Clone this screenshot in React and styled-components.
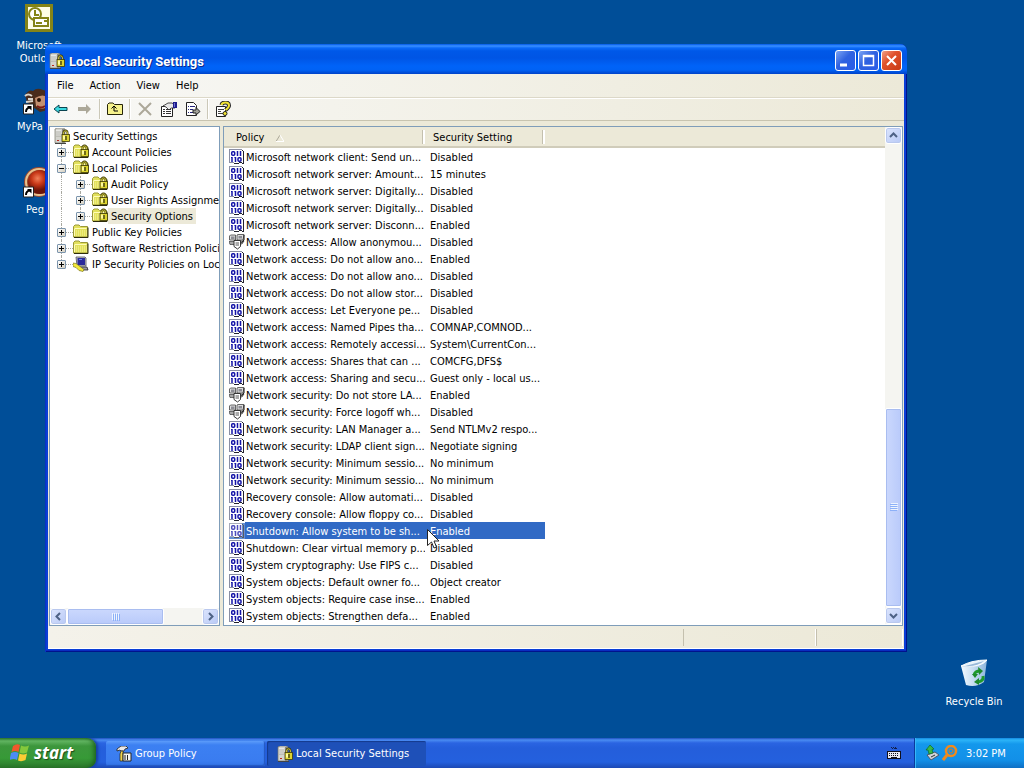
import { useState } from 'react'
import styled, { createGlobalStyle, css } from 'styled-components'

const GlobalStyle = createGlobalStyle`
  * {
    box-sizing: border-box;
  }

  body {
    margin: 0;
    overflow: hidden;
    font-family: 'DejaVu Sans Condensed', 'DejaVu Sans', Tahoma, sans-serif;
    font-size: 11px;
    color: #000;
    cursor: default;
  }

  button {
    font: inherit;
    padding: 0;
    border: none;
    background: none;
  }

  svg {
    display: block;
    flex: none;
  }
`

const Screen = styled.div`
  display: flex;
  flex-direction: column;
  height: 100vh;
  background: #004e98;
`

const Desktop = styled.main`
  position: relative;
  flex: 1;
  overflow: hidden;
`

const Shortcut = styled.a`
  position: absolute;
  left: ${({ $left }) => $left};
  right: ${({ $right }) => $right};
  top: ${({ $top }) => $top};
  bottom: ${({ $bottom }) => $bottom};
  width: 76px;
  display: flex;
  flex-direction: column;
  align-items: center;
  gap: 5px;
  color: #fff;
  text-decoration: none;
  line-height: 13px;
  text-align: center;
`

const ShortcutLabel = styled.span`
  width: ${({ $width }) => $width};
  text-align: ${({ $width }) => ($width ? 'left' : 'center')};
`

const AppWindow = styled.section`
  position: absolute;
  left: 45px;
  right: 117px;
  top: 44px;
  padding: 0 3px 3px;
  border-radius: 7px 7px 0 0;
  background: #0a3ed6;
  box-shadow: inset 1px 0 #0a32c4, inset -1px -1px #00138c, inset 0 -2px #0a2cc0;
  overflow: hidden;
`

const TitleBar = styled.header`
  display: flex;
  align-items: center;
  gap: 4px;
  height: 30px;
  margin: 0 -3px;
  padding: 3px 5px 0 4px;
  background: linear-gradient(
    #0058e6 0,
    #3a90ff 2px,
    #0a6af8 4px,
    #0058e8 7px,
    #0055e5 14px,
    #0063f8 22px,
    #0062f5 26px,
    #0042c8 30px
  );
`

const Title = styled.h1`
  flex: 1;
  margin: 0;
  padding-top: 2px;
  color: #fff;
  font-family: Roboto, sans-serif;
  font-size: 13px;
  font-weight: 700;
  line-height: 18px;
  text-shadow: 1px 1px #0a2a8c;
`

const Captions = styled.div`
  display: flex;
  gap: 2px;
`

const CaptionButton = styled.button`
  width: 21px;
  height: 21px;
  border: 1px solid #fff;
  border-radius: 3px;
  background: ${({ $close }) =>
    $close
      ? 'linear-gradient(135deg, #f0a088, #e0522c 40%, #c83a14)'
      : 'linear-gradient(135deg, #7ca4f4, #2f62e0 45%, #2a5ce8)'};
`

const MenuBar = styled.nav`
  display: flex;
  align-items: center;
  height: 23px;
  padding-left: 1px;
  background: linear-gradient(90deg, #f8f8f6, #ece9d8);
`

const MenuItem = styled.button`
  padding: 0 8px;
  line-height: 21px;
`

const ToolBar = styled.div`
  display: flex;
  align-items: center;
  height: 24px;
  padding-left: 1px;
  border-top: 1px solid #dcd8c8;
  border-bottom: 1px solid #c8c4b0;
  box-shadow: inset 0 1px #fff;
  background: linear-gradient(90deg, #f8f8f6, #ece9d8);
`

const ToolButton = styled.button`
  display: grid;
  place-items: center;
  width: 24px;
  height: 22px;
`

const ToolSeparator = styled.span`
  width: 2px;
  height: 20px;
  margin: 0 2px;
  border-left: 1px solid #cbc8b8;
  background: #fff;
`

const Panes = styled.div`
  display: flex;
  gap: 3px;
  padding: 5px 1px 0;
  background: #ece9d8;
`

const Pane = styled.div`
  border: 1px solid #7f9db9;
  background: #fff;
  overflow: hidden;
`

const TreePane = styled(Pane)`
  flex: none;
  width: 171px;
  display: flex;
  flex-direction: column;
`

const ListPane = styled(Pane)`
  flex: 1;
  display: flex;
  align-items: flex-start;
  padding-bottom: 1px;
`

const Tree = styled.ul`
  flex: 1;
  margin: 0;
  padding: 1px 0 0 4px;
  list-style: none;
`

const TreeItem = styled.li`
  display: flex;
  align-items: center;
  height: 16px;
  white-space: nowrap;
`

const Guide = styled.span`
  position: relative;
  flex: none;
  width: 19px;
  height: 16px;
  display: flex;
  align-items: center;
  padding-left: 3px;

  &::before {
    content: '';
    position: absolute;
    left: 7px;
    top: 0;
    height: ${({ $last }) => ($last ? '8px' : '16px')};
    border-left: ${({ $line }) => ($line ? '1px dotted #a8a8a0' : 'none')};
  }

  &::after {
    content: '';
    position: absolute;
    left: 12px;
    right: 0;
    top: 8px;
    border-top: ${({ $branch }) => ($branch ? '1px dotted #a8a8a0' : 'none')};
  }
`

const Expander = styled.button`
  position: relative;
  z-index: 1;
  width: 9px;
  height: 9px;
  border: 1px solid #7b94ac;
  border-radius: 1px;
  background: linear-gradient(135deg, #fff, #d4cfc0);

  svg {
    width: 7px;
    height: 7px;
  }
`

const TreeLabel = styled.span`
  min-width: 0;
  height: 16px;
  padding: 2px 3px 0;
  overflow: hidden;
  line-height: 14px;
  background: ${({ $selected }) => ($selected ? '#ece9d8' : 'transparent')};
`

const PolicyTable = styled.table`
  flex: 1;
  table-layout: fixed;
  width: 100%;
  border-spacing: 0;
  white-space: nowrap;
`

const HeadCell = styled.th`
  position: relative;
  height: 21px;
  padding: 3px 0 0 ${({ $pad }) => $pad};
  border-bottom: 2px solid #d0ccba;
  background: #ece9d8;
  font-weight: 400;
  line-height: 16px;
  text-align: left;

  &:not(:last-child)::after {
    content: '';
    position: absolute;
    right: 0;
    top: 3px;
    width: 2px;
    height: 14px;
    border-left: 1px solid #c4c0ae;
    background: #fff;
  }
`

const HeadLabel = styled.span`
  display: flex;
  align-items: center;
  gap: 12px;
`

const PolicyRow = styled.tr`
  height: 17px;

  ${({ $selected }) =>
    $selected &&
    css`
      color: #fff;

      td:nth-child(2),
      td:first-child span {
        background: #316ac5;
      }

      td:first-child svg {
        background: #316ac5;
        opacity: 0.75;
      }
    `}
`

const Cell = styled.td`
  height: 17px;
  padding: ${({ $name }) => ($name ? '0 0 0 5px' : '2px 0 0 5px')};
  line-height: 15px;
  overflow: hidden;
`

const PolicyName = styled.div`
  display: flex;
  align-items: center;
  height: 17px;

  span {
    flex: 1;
    height: 17px;
    padding: 2px 0 0 1px;
  }
`

const ScrollBar = styled.div`
  display: flex;
  flex: none;
  align-self: stretch;
  flex-direction: ${({ $vertical }) => ($vertical ? 'column' : 'row')};
  ${({ $vertical }) => ($vertical ? 'width: 17px' : 'height: 17px')};
  background: #f5f5f1;
`

const ArrowButton = styled.button`
  flex: none;
  display: grid;
  place-items: center;
  width: 17px;
  height: 17px;
  border: 1px solid #fff;
  border-radius: 3px;
  background: linear-gradient(135deg, #dce5fd, #b8c9f6);
  box-shadow: inset 0 0 0 1px #b9c8ee;
`

const Track = styled.div`
  flex: 1;
  display: flex;
  flex-direction: inherit;
  justify-content: ${({ $end }) => ($end ? 'flex-end' : 'flex-start')};
`

const Thumb = styled.div`
  display: grid;
  place-items: center;
  flex: 0 0 ${({ $share }) => $share};
  border: 1px solid #fff;
  border-radius: 2px;
  background: ${({ $vertical }) =>
    `linear-gradient(${$vertical ? '90deg' : '180deg'}, #cbd8fd, #b9cafa)`};
  box-shadow: inset 0 0 0 1px #a9bdf0;
`

const StatusBar = styled.footer`
  display: flex;
  justify-content: flex-end;
  height: 23px;
  padding: 3px 1px 2px;
  background: linear-gradient(90deg, #f4f2ea, #ece9d8);
  border-bottom: 1px solid #fff;
`

const StatusCell = styled.span`
  flex: 0 0 ${({ $width }) => $width};
  border-left: 1px solid #c4c0ae;
  border-right: 1px solid #fff;
`

const Pointer = styled.svg`
  position: absolute;
  left: 427px;
  top: 529px;
`

const TaskBar = styled.footer`
  display: flex;
  height: 30px;
  color: #fff;
  background: linear-gradient(
    #1f50c0 0,
    #4a8cf2 2px,
    #2a64e2 5px,
    #245edb 10px,
    #2460de 24px,
    #1c48b4 30px
  );
`

const StartButton = styled.button`
  display: flex;
  align-items: center;
  gap: 4px;
  width: 96px;
  padding-left: 10px;
  border-radius: 0 9px 9px 0;
  color: #fff;
  font-family: 'Open Sans', sans-serif;
  font-size: 17px;
  font-style: italic;
  font-weight: 700;
  line-height: 24px;
  text-shadow: 1px 1px 1px #1a4a1a;
  background: linear-gradient(#2d7a2d 0, #62b562 3px, #3c963c 8px, #379a37 20px, #2a752a 30px);
  box-shadow: inset -4px 0 5px -2px #1c5f1c, 2px 0 3px #163f9c;
`

const Tasks = styled.div`
  flex: 1;
  display: flex;
  gap: 2px;
  padding: 3px 0 2px 10px;
`

const TaskButton = styled.button`
  flex: 0 1 159px;
  display: flex;
  align-items: center;
  gap: 3px;
  padding-left: 10px;
  border-radius: 2px;
  color: #fff;
  white-space: nowrap;
  background: ${({ $active }) =>
    $active ? '#1e50b8' : 'linear-gradient(#5c9cfa 0, #3c80f2 4px, #3a7cf0 20px, #3272e4)'};
  box-shadow: ${({ $active }) =>
    $active ? 'inset 1px 1px 1px #143a8c' : 'inset -1px -1px 1px #2458c0'};
`

const Language = styled.div`
  display: grid;
  place-items: center;
  width: 40px;
`

const Tray = styled.div`
  display: flex;
  align-items: center;
  gap: 2px;
  width: 110px;
  padding-left: 9px;
  border-left: 1px solid #0a3a9c;
  background: linear-gradient(#1488e0 0, #2cb4f8 2px, #1498ec 6px, #1290e8 22px, #0f6fc4 30px);
  box-shadow: inset 1px 0 #38b8f8;
`

const Clock = styled.time`
  margin-left: 6px;
  white-space: nowrap;
`

const LockGlyph = ({ x = 8, y = 2 }) => (
  <g transform={`translate(${x} ${y})`}>
    <path d="M1.500 5V3Q1.500 .5 3.500 .5T5.500 3V5" fill="none" stroke="#3c3808" strokeWidth="2" />
    <path d="M1.500 5V3Q1.500 .8 3.500 .8T5.500 3V5" fill="none" stroke="#e8e048" strokeWidth=".8" />
    <rect x="0" y="4.500" width="7.500" height="7" fill="#dcd430" stroke="#3c3808" strokeWidth=".8" />
    <path d="M1 5.500h2v4H1z" fill="#fffaa0" />
    <path d="M4 6v4" stroke="#26240a" strokeWidth="1.200" />
  </g>
)

const ServerIcon = () => (
  <svg width="16" height="16" viewBox="0 0 16 16">
    <path d="M1 1l2-1h6l2 1v14H1z" fill="#d4d4ce" stroke="#77756c" strokeWidth=".7" />
    <path d="M8 1v14h2.500V1z" fill="#8c8a80" />
    <path d="M2 3h5M2 5h5M2 7h5" stroke="#fff" />
    <path d="M2 4h5M2 6h5M2 8h5" stroke="#8c8a80" strokeWidth=".6" />
    <path d="M3 12.500h2" stroke="#c02418" />
    <path d="M1 15.500h11" stroke="#444" />
    <LockGlyph x={8} y={2} />
  </svg>
)

const FolderIcon = ({ locked }) => (
  <svg width="16" height="16" viewBox="0 0 16 16">
    <path d="M.5 13V2.500L2 1h4l1.500 1.500h7V13z" fill="#e2e05c" stroke="#9a9838" />
    <path d="M1.500 4.500h12M1.500 5v7" stroke="#fffcb8" />
    <path d="M3 7h11M3 9h11M3 11h11" stroke="#f8f6a0" strokeDasharray="1 1" />
    <path d="M1 13.500h14V3.500" fill="none" stroke="#2e2c0c" />
    {locked && <LockGlyph x={8} y={1} />}
  </svg>
)

const IpSecurityIcon = () => (
  <svg width="16" height="16" viewBox="0 0 16 16">
    <path d="M3 1h9l1 1v8H4z" fill="#c4c4c8" stroke="#50505c" strokeWidth=".8" />
    <rect x="4.500" y="2" width="7.500" height="7" fill="#2a2a9c" />
    <path d="M6 3h3v1H6z" fill="#6a80e8" />
    <path d="M6 11h8l1 3H7z" fill="#9a9aa0" stroke="#22222c" strokeWidth=".8" />
    <path d="M0 7l3 .5 4 3 4 3-1 2-4-1-3-3-3-1z" fill="#f2e83c" stroke="#6a6410" strokeWidth=".6" />
  </svg>
)

// binary value policy: two rows of bits on a curled page
const BinaryIcon = () => (
  <svg width="16" height="16" viewBox="0 0 16 16">
    <g shapeRendering="crispEdges">
      <path d="M1 1h12v13H9l-1 1H6l-1-1H1z" fill="#fff" />
      <path d="M0 14V0h13v1H1v12h4v1z" fill="#8a8fa4" />
      <path d="M14 2h1v13h-2v-1h1zM13 1h1v1h-1zM5 14h5v1H5zM10 13h3v1h-3z" fill="#22222e" />
    </g>
    <g fill="none" stroke="#1414a8">
      <rect x="2.700" y="2.700" width="3" height="3.600" rx="1" strokeWidth="1.500" />
      <path d="M8.500 2v5M11.500 2v5M3 8v5M6.500 8v5" strokeWidth="1.500" />
      <path d="M2 8.500h1M5.500 8.500h1" />
      <rect x="9" y="8.700" width="3" height="3.600" rx="1" strokeWidth="1.500" />
    </g>
  </svg>
)

const ComputersIcon = () => (
  <svg width="16" height="16" viewBox="0 0 16 16">
    <path d="M.5 2l1-1h5v5H.5zM8 1l1-.5h6L14 6H8z" fill="#dcdcdc" stroke="#444" strokeWidth=".8" />
    <path d="M2 2.500h3.500v2.500H2zM9.500 2H13v2.500H9.500z" fill="#8c8c94" />
    <path d="M0 7.500h6v3H1zM9 7h6l-2 3H9z" fill="#a8a8a8" stroke="#222" strokeWidth=".6" />
    <path d="M5 6.500h6.500v6L8.500 15 5 12.500z" fill="#fff" stroke="#222" strokeWidth=".9" />
    <path d="M6.500 9h3.500M6.500 11h3.500" stroke="#555" />
    <path d="M15 1v5l-2.500 3" fill="none" stroke="#111" />
  </svg>
)

const toolIcons = {
  back: <path d="M1 8l5-4v2.500h8v3H6V12z" fill="#3cd8e0" stroke="#0a4450" />,
  forward: <path d="M14 8L9 3v3H1v4h8v3z" fill="#aca899" />,
  up: (
    <>
      <path d="M.5 13.500V3.500L2 2h4l1.500 1.500h8v10z" fill="#f6f28c" stroke="#26240a" />
      <path d="M7 5v5h4M4.500 7.500L7 5l2.500 2.500" fill="none" stroke="#000" />
    </>
  ),
  remove: <path d="M2 2l12 12M14 2L2 14" stroke="#aca899" strokeWidth="2" />,
  properties: (
    <>
      <path d="M.5 5.500h11v10H.5z" fill="#fff" stroke="#222" />
      <path d="M2 8.500h2M5 8.500h5M2 10.500h2M5 10.500h5M2 12.500h2M5 12.500h5" stroke="#333" />
      <path d="M2 5l5-3h4l3 2v3h-4L8 9 5 6z" fill="#e8e8e8" stroke="#222" strokeWidth=".8" />
      <path d="M12 1h4v6h-4z" fill="#1c1c8c" />
      <path d="M13 2h1v4h-1z" fill="#7070d0" />
    </>
  ),
  exportList: (
    <>
      <path d="M1.500 1.500h7l3 3v10h-10z" fill="#fff" stroke="#222" />
      <path d="M3 5.500h1M5 5.500h5M3 8.500h1M5 8.500h3M3 11.500h1M5 11.500h3" stroke="#24247c" />
      <path d="M8 9h3V6.500L15 10.500 11 14v-2H8z" fill="#a0a098" stroke="#222" />
    </>
  ),
  help: (
    <>
      <path d="M1.500 5.500h9v10h-9z" fill="#fff" stroke="#222" />
      <path d="M3 8.500h6M3 10.500h3M3 12.500h6" stroke="#444" />
      <path d="M6.500 4Q7 1.500 10.500 1.500T14 4.500Q14 6.500 10.500 9" fill="none" stroke="#222" strokeWidth="4" />
      <path d="M6.500 4Q7 1.500 10.500 1.500T14 4.500Q14 6.500 10.500 9" fill="none" stroke="#f2e432" strokeWidth="2" />
      <circle cx="10" cy="12.500" r="2" fill="#f2e432" stroke="#222" />
    </>
  ),
}

const ToolIcon = ({ name }) => (
  <svg width="16" height="16" viewBox="0 0 16 16">
    {toolIcons[name]}
  </svg>
)

const captionShapes = {
  Minimize: <path d="M4 14h7" stroke="#fff" strokeWidth="3" />,
  Maximize: <path d="M4.500 14.500v-10h10v10zM4 5.500h11" fill="none" stroke="#fff" strokeWidth="1.500" />,
  Close: <path d="M5 5l9 9M14 5l-9 9" stroke="#fff" strokeWidth="2" />,
}

const chevrons = {
  up: 'M1 6l3.500-3.500L8 6',
  down: 'M1 3l3.500 3.500L8 3',
  left: 'M6 1L2.500 4.500 6 8',
  right: 'M3 1l3.500 3.500L3 8',
}

const ScrollArrow = ({ dir }) => (
  <ArrowButton aria-label={`Scroll ${dir}`}>
    <svg width="9" height="9" viewBox="0 0 9 9">
      <path d={chevrons[dir]} fill="none" stroke="#4d6185" strokeWidth="2" />
    </svg>
  </ArrowButton>
)

const Grip = ({ vertical }) => (
  <svg width="8" height="8" viewBox="0 0 8 8" shapeRendering="crispEdges">
    <g transform={vertical ? 'rotate(90 4 4)' : undefined}>
      <path d="M0 0h1v7H0zM2 0h1v7H2zM4 0h1v7H4zM6 0h1v7H6z" fill="#eef4fe" />
      <path d="M1 1h1v7H1zM3 1h1v7H3zM5 1h1v7H5zM7 1h1v7H7z" fill="#8cb0f8" />
    </g>
  </svg>
)

const ShortcutArrow = () => (
  <>
    <path d="M.5 21h10v10H.5z" fill="#fff" stroke="#222" />
    <path d="M3 29q0-4 4-4.500" fill="none" stroke="#000" strokeWidth="2" />
    <path d="M4 23h4.500v4.500z" fill="#000" />
  </>
)

const OutlookIcon = () => (
  <svg width="32" height="32" viewBox="0 0 32 32">
    <rect x="2" y="2" width="28" height="28" fill="#848418" />
    <rect x="5" y="5" width="22" height="22" fill="#fdfde8" />
    <circle cx="12" cy="12" r="6" fill="#fff" stroke="#848418" strokeWidth="2" />
    <path d="M12 8v5h4" fill="none" stroke="#848418" strokeWidth="2" />
    <path d="M11 16h14v8H11z" fill="#fff" stroke="#848418" strokeWidth="2" />
    <path d="M13 21h6M21 19h3" stroke="#848418" strokeWidth="2" />
  </svg>
)

const FaceIcon = () => (
  <svg width="32" height="32" viewBox="0 0 32 32">
    <path d="M2 12q4-6 8-4 4-4 10-1l8 2 4 8-3 9-12 3-7-5-6-5z" fill="#4a2c1c" />
    <path d="M2 13q3-3 7 0M3 19l7-1M5 16h5" stroke="#d8d4cc" strokeWidth="2" fill="none" />
    <path d="M12 15q8-5 14 0l-2 9q-6 4-11-1z" fill="#c49070" />
    <circle cx="16" cy="17" r="2" fill="#2a1408" />
    <path d="M14 23q4 3 8 0" stroke="#7a1c14" strokeWidth="2" fill="none" />
    <ShortcutArrow />
  </svg>
)

const BallIcon = () => (
  <svg width="32" height="32" viewBox="0 0 32 32">
    <defs>
      <radialGradient id="ball" cx=".4" cy=".35">
        <stop offset="0" stopColor="#f08058" />
        <stop offset=".5" stopColor="#c83818" />
        <stop offset="1" stopColor="#6c1408" />
      </radialGradient>
    </defs>
    <circle cx="16" cy="16" r="15" fill="#9a4a30" />
    <circle cx="16" cy="16" r="13" fill="none" stroke="#e8c08c" strokeWidth="2" />
    <circle cx="17" cy="16" r="12" fill="url(#ball)" />
    <ShortcutArrow />
  </svg>
)

const RecycleBinIcon = () => (
  <svg width="32" height="32" viewBox="0 0 32 32">
    <defs>
      <linearGradient id="bin">
        <stop offset="0" stopColor="#f4faff" />
        <stop offset=".5" stopColor="#c4dcf0" />
        <stop offset="1" stopColor="#8cb4dc" />
      </linearGradient>
    </defs>
    <path d="M3 8q13 3 26-6l-3 22q-8 6-18 3z" fill="url(#bin)" />
    <path d="M3 8Q14 2 29 2q-6 8-26 6z" fill="#e8f4fc" stroke="#fff" />
    <path d="M7 8q12 1 19-5-4 1-19 5z" fill="#98b8d8" />
    <g fill="none" stroke="#1e9a2c" strokeWidth="3">
      <path d="M16 17q1-4 6-4" />
      <path d="M25 18q1 5-5 6" />
    </g>
    <path d="M20 9l5 4-4 4zM21 20v7l-5-3zM14 16h6l-3 4z" fill="#1e8a2c" />
  </svg>
)

const FlagIcon = () => (
  <svg width="20" height="20" viewBox="0 0 20 20">
    <path d="M3 3q4-3 7-1L8.500 9Q5 7 1.500 9z" fill="#f0582c" />
    <path d="M11 2.500q4 2 8 0L17 9.500q-4 2-7.500 0z" fill="#84c83c" />
    <path d="M1 10q4-2 7.500 0L7 17Q4 15-.5 17z" fill="#4c8cf4" />
    <path d="M9.500 10.500q4 2 7.500 0L15.500 17q-4 2-7.500.5z" fill="#fccc34" />
  </svg>
)

const GroupPolicyIcon = () => (
  <svg width="16" height="16" viewBox="0 0 16 16">
    <path d="M1 3l4-3h5l2 2-3 1-1 2H5L4 4 1 5z" fill="#e8e8e8" stroke="#222" strokeWidth=".8" />
    <path d="M5 5h2v10H4V8z" fill="#f0d44c" stroke="#222" strokeWidth=".7" />
    <path d="M7 7h8v8H7z" fill="#f4f4f0" stroke="#222" />
    <path d="M9 9v5M11.500 9v5" stroke="#222" />
  </svg>
)

const KeyboardIcon = () => (
  <svg width="14" height="14" viewBox="0 0 14 14" shapeRendering="crispEdges">
    <path d="M4 1h1v1H4zM6 1h1v1H6zM8 1h1v1H8zM5 2h1v1H5zM7 2h3v1H7z" fill="#10204c" />
    <rect x="0" y="5" width="14" height="8" fill="#10101c" />
    <path d="M1 6h12v6H1z" fill="#e8e8f0" />
    <path d="M2 7.500h10M2 9.500h10" stroke="#10101c" strokeDasharray="1 1" />
    <path d="M4 11h6" stroke="#10101c" />
  </svg>
)

const EjectIcon = () => (
  <svg width="16" height="16" viewBox="0 0 16 16">
    <path d="M3 10l8-3 4 3-8 5z" fill="#d0d4d8" stroke="#445" strokeWidth=".8" />
    <path d="M7 12l4-2" stroke="#333" />
    <path d="M2 5l4-5 4 4-2 .5L9 8l-4 1-1-4z" fill="#38b848" stroke="#0c6c28" strokeWidth=".7" />
  </svg>
)

const SearchIcon = () => (
  <svg width="16" height="16" viewBox="0 0 16 16">
    <circle cx="9" cy="6" r="5" fill="none" stroke="#f08a1c" strokeWidth="2.500" />
    <circle cx="9" cy="6" r="2" fill="none" stroke="#e87814" />
    <path d="M5 10l-4 5" stroke="#f08a1c" strokeWidth="3" />
  </svg>
)

const treeItems = [
  { label: 'Security Settings', depth: 0, icon: 'server' },
  { label: 'Account Policies', depth: 1, icon: 'locked', state: '+' },
  { label: 'Local Policies', depth: 1, icon: 'locked', state: '-' },
  { label: 'Audit Policy', depth: 2, icon: 'locked', state: '+' },
  { label: 'User Rights Assignment', depth: 2, icon: 'locked', state: '+' },
  { label: 'Security Options', depth: 2, icon: 'locked', state: '+', last: true },
  { label: 'Public Key Policies', depth: 1, icon: 'folder', state: '+' },
  { label: 'Software Restriction Policies', depth: 1, icon: 'folder', state: '+' },
  { label: 'IP Security Policies on Local Computer', depth: 1, icon: 'ip', state: '+', last: true },
]

const treeIcons = {
  server: <ServerIcon />,
  locked: <FolderIcon locked />,
  folder: <FolderIcon />,
  ip: <IpSecurityIcon />,
}

const policies = [
  ['Microsoft network client: Send un...', 'Disabled'],
  ['Microsoft network server: Amount...', '15 minutes'],
  ['Microsoft network server: Digitally...', 'Disabled'],
  ['Microsoft network server: Digitally...', 'Disabled'],
  ['Microsoft network server: Disconn...', 'Enabled'],
  ['Network access: Allow anonymou...', 'Disabled', 'computers'],
  ['Network access: Do not allow ano...', 'Enabled'],
  ['Network access: Do not allow ano...', 'Disabled'],
  ['Network access: Do not allow stor...', 'Disabled'],
  ['Network access: Let Everyone pe...', 'Disabled'],
  ['Network access: Named Pipes tha...', 'COMNAP,COMNOD...'],
  ['Network access: Remotely accessi...', 'System\\CurrentCon...'],
  ['Network access: Shares that can ...', 'COMCFG,DFS$'],
  ['Network access: Sharing and secu...', 'Guest only - local us...'],
  ['Network security: Do not store LA...', 'Enabled', 'computers'],
  ['Network security: Force logoff wh...', 'Disabled', 'computers'],
  ['Network security: LAN Manager a...', 'Send NTLMv2 respo...'],
  ['Network security: LDAP client sign...', 'Negotiate signing'],
  ['Network security: Minimum sessio...', 'No minimum'],
  ['Network security: Minimum sessio...', 'No minimum'],
  ['Recovery console: Allow automati...', 'Disabled'],
  ['Recovery console: Allow floppy co...', 'Disabled'],
  ['Shutdown: Allow system to be sh...', 'Enabled'],
  ['Shutdown: Clear virtual memory p...', 'Disabled'],
  ['System cryptography: Use FIPS c...', 'Disabled'],
  ['System objects: Default owner fo...', 'Object creator'],
  ['System objects: Require case inse...', 'Enabled'],
  ['System objects: Strengthen defa...', 'Enabled'],
]

const PolicyTree = () => (
  <Tree>
    {treeItems.map((item) => (
      <TreeItem key={item.label}>
        {item.depth === 2 && <Guide $line />}
        {item.depth > 0 && (
          <Guide $line $branch $last={item.last}>
            <Expander aria-label={item.label}>
              <svg viewBox="0 0 7 7" shapeRendering="crispEdges">
                <path d={item.state === '+' ? 'M1 3h5v1H1zM3 1h1v5H3z' : 'M1 3h5v1H1z'} />
              </svg>
            </Expander>
          </Guide>
        )}
        {treeIcons[item.icon]}
        <TreeLabel $selected={item.label === 'Security Options'}>{item.label}</TreeLabel>
      </TreeItem>
    ))}
  </Tree>
)

const App = () => {
  const [selected, setSelected] = useState(22)

  return (
    <Screen>
      <GlobalStyle />
      <Desktop>
        <Shortcut href="#outlook" $left="1px" $top="2px">
          <OutlookIcon />
          <ShortcutLabel>
            Microsoft
            <br />
            Outlook
          </ShortcutLabel>
        </Shortcut>
        <Shortcut href="#mypa" $left="1px" $top="83px">
          <FaceIcon />
          <ShortcutLabel $width="44px">MyPa</ShortcutLabel>
        </Shortcut>
        <Shortcut href="#peg" $left="1px" $top="166px">
          <BallIcon />
          <ShortcutLabel $width="26px">Peg</ShortcutLabel>
        </Shortcut>
        <Shortcut href="#recycle" $right="12px" $bottom="30px">
          <RecycleBinIcon />
          <ShortcutLabel>Recycle Bin</ShortcutLabel>
        </Shortcut>

        <AppWindow>
          <TitleBar>
            <ServerIcon />
            <Title>Local Security Settings</Title>
            <Captions>
              {Object.keys(captionShapes).map((name) => (
                <CaptionButton key={name} aria-label={name} $close={name === 'Close'}>
                  <svg width="19" height="19" viewBox="0 0 19 19">
                    {captionShapes[name]}
                  </svg>
                </CaptionButton>
              ))}
            </Captions>
          </TitleBar>
          <MenuBar>
            <MenuItem>File</MenuItem>
            <MenuItem>Action</MenuItem>
            <MenuItem>View</MenuItem>
            <MenuItem>Help</MenuItem>
          </MenuBar>
          <ToolBar>
            {['back', 'forward', '|', 'up', '|', 'remove', 'properties', 'exportList', '|', 'help'].map(
              (name, i) =>
                name === '|' ? (
                  <ToolSeparator key={i} />
                ) : (
                  <ToolButton key={name} aria-label={name}>
                    <ToolIcon name={name} />
                  </ToolButton>
                ),
            )}
          </ToolBar>

          <Panes>
            <TreePane>
              <PolicyTree />
              <ScrollBar>
                <ScrollArrow dir="left" />
                <Track>
                  <Thumb $share="72%">
                    <Grip />
                  </Thumb>
                </Track>
                <ScrollArrow dir="right" />
              </ScrollBar>
            </TreePane>
            <ListPane>
              <PolicyTable>
                <colgroup>
                  <col width="201" />
                  <col width="120" />
                  <col />
                </colgroup>
                <thead>
                  <tr>
                    <HeadCell $pad="12px">
                      <HeadLabel>
                        Policy
                        <svg width="8" height="7" viewBox="0 0 8 7">
                          <path d="M0 6.500L4 0" stroke="#aca899" />
                          <path d="M4 0l4 6.500H0" fill="none" stroke="#fff" />
                        </svg>
                      </HeadLabel>
                    </HeadCell>
                    <HeadCell $pad="8px">Security Setting</HeadCell>
                    <HeadCell $pad="0" aria-hidden="true" />
                  </tr>
                </thead>
                <tbody>
                  {policies.map(([name, setting, icon], i) => (
                    <PolicyRow key={i} $selected={i === selected} onClick={() => setSelected(i)}>
                      <Cell $name>
                        <PolicyName>
                          {icon === 'computers' ? <ComputersIcon /> : <BinaryIcon />}
                          <span>{name}</span>
                        </PolicyName>
                      </Cell>
                      <Cell>{setting}</Cell>
                      <Cell />
                    </PolicyRow>
                  ))}
                </tbody>
              </PolicyTable>
              <ScrollBar $vertical>
                <ScrollArrow dir="up" />
                <Track $end>
                  <Thumb $vertical $share="43%">
                    <Grip vertical />
                  </Thumb>
                </Track>
                <ScrollArrow dir="down" />
              </ScrollBar>
            </ListPane>
          </Panes>
          <StatusBar>
            <StatusCell $width="133px" />
            <StatusCell $width="87px" />
          </StatusBar>
        </AppWindow>

        <Pointer width="12" height="20" viewBox="0 0 12 20">
          <path d="M.5.5v16l4-3.500 2.500 6 2.500-1-2.500-6h5z" fill="#fff" stroke="#222" />
        </Pointer>
      </Desktop>

      <TaskBar>
        <StartButton>
          <FlagIcon />
          start
        </StartButton>
        <Tasks>
          <TaskButton>
            <GroupPolicyIcon />
            Group Policy
          </TaskButton>
          <TaskButton $active>
            <ServerIcon />
            Local Security Settings
          </TaskButton>
        </Tasks>
        <Language>
          <KeyboardIcon />
        </Language>
        <Tray>
          <EjectIcon />
          <SearchIcon />
          <Clock>3:02 PM</Clock>
        </Tray>
      </TaskBar>
    </Screen>
  )
}

export default App
